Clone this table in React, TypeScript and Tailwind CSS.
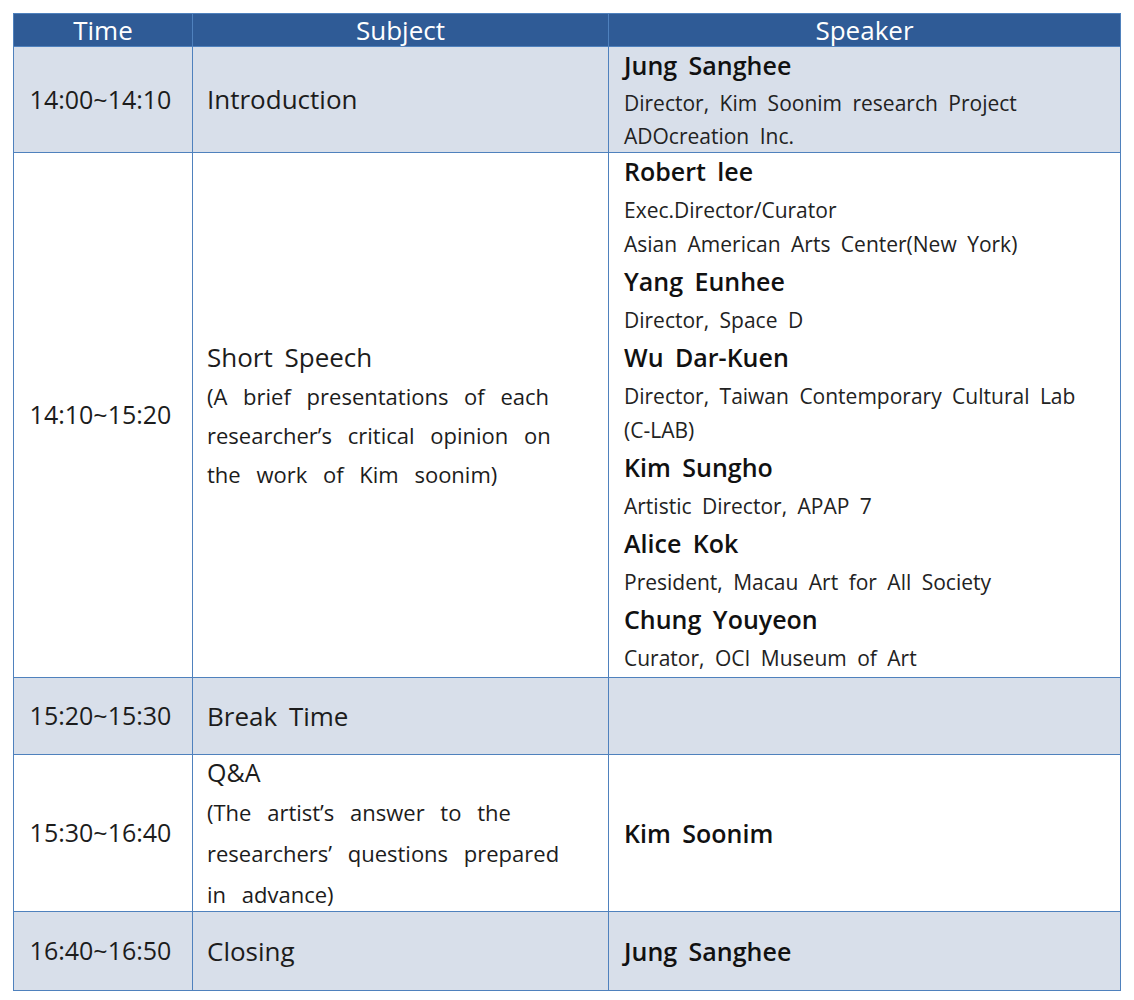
import React from "react";

type Speaker = { name: string; lines: string[] };

const shortSpeech: Speaker[] = [
  { name: "Robert lee", lines: ["Exec.Director/Curator", "Asian American Arts Center(New York)"] },
  { name: "Yang Eunhee", lines: ["Director, Space D"] },
  { name: "Wu Dar-Kuen", lines: ["Director, Taiwan Contemporary Cultural Lab", "(C-LAB)"] },
  { name: "Kim Sungho", lines: ["Artistic Director, APAP 7"] },
  { name: "Alice Kok", lines: ["President, Macau Art for All Society"] },
  { name: "Chung Youyeon", lines: ["Curator, OCI Museum of Art"] },
];

const cell = "border border-[#4f81bd] p-0";
const timeCell = `${cell} text-center text-[25px] pr-[5px]`;
const nameText = "text-[25px] leading-[36px] font-semibold text-[#111]";

function SpeakerList({ items }: { items: Speaker[] }) {
  return (
    <div className="flex flex-col pl-[15px]">
      {items.map((s) => (
        <div key={s.name} className="pb-[2px]">
          <div className={nameText}>{s.name}</div>
          <div className="pt-[4px]">
            {s.lines.map((l) => (
              <div key={l} className="text-[21px] leading-[34px] text-[#222]">
                {l}
              </div>
            ))}
          </div>
        </div>
      ))}
    </div>
  );
}

export default function App() {
  return (
    <div className="bg-white w-[1134px] h-[1000px] overflow-hidden pt-[13px] pl-[13px] [font-family:'Open_Sans','Noto_Sans',sans-serif] [word-spacing:5px]">
      <table className="border-collapse table-fixed w-[1107px]">
        <colgroup>
          <col className="w-[179px]" />
          <col className="w-[416px]" />
          <col className="w-[512px]" />
        </colgroup>
        <thead>
          <tr className="h-[32px] bg-[#2f5b96] text-white text-[26px] leading-[32px]">
            <th className={`${cell} font-normal`}>Time</th>
            <th className={`${cell} font-normal`}>Subject</th>
            <th className={`${cell} font-normal`}>Speaker</th>
          </tr>
        </thead>
        <tbody className="text-[#1c1c1c]">
          <tr className="h-[106px] bg-[#d8dfea]">
            <td className={timeCell}>14:00~14:10</td>
            <td className={`${cell} pl-[14px] text-[26px]`}>Introduction</td>
            <td className={`${cell} align-top`}>
              <div className="pl-[15px] h-[104px]">
                <div className={nameText}>Jung Sanghee</div>
                <div className="pt-[4px] text-[21px] leading-[33px] text-[#222]">
                  <div>Director, Kim Soonim research Project</div>
                  <div>ADOcreation Inc.</div>
                </div>
              </div>
            </td>
          </tr>
          <tr className="h-[525px] bg-white">
            <td className={timeCell}>14:10~15:20</td>
            <td className={`${cell} pl-[14px]`}>
              <div className="text-[26px] leading-[40px]">Short Speech</div>
              <div className="text-[22px] leading-[39px] [word-spacing:10px] pr-[20px]">
                (A brief presentations of each researcher’s critical opinion on the work of Kim soonim)
              </div>
            </td>
            <td className={`${cell} align-top`}>
              <SpeakerList items={shortSpeech} />
            </td>
          </tr>
          <tr className="h-[77px] bg-[#d8dfea]">
            <td className={timeCell}>15:20~15:30</td>
            <td className={`${cell} pl-[14px] text-[26px]`}>Break Time</td>
            <td className={cell}></td>
          </tr>
          <tr className="h-[157px] bg-white">
            <td className={timeCell}>15:30~16:40</td>
            <td className={`${cell} pl-[14px] pr-[20px]`}>
              <div className="h-[155px] flex flex-col justify-center">
                <div className="text-[25px] leading-[40px] shrink-0">Q&amp;A</div>
                <div className="text-[22px] leading-[41px] [word-spacing:10px] shrink-0">
                  (The artist’s answer to the researchers’ questions prepared in advance)
                </div>
              </div>
            </td>
            <td className={`${cell} pl-[15px] ${nameText}`}>Kim Soonim</td>
          </tr>
          <tr className="h-[79px] bg-[#d8dfea]">
            <td className={timeCell}>16:40~16:50</td>
            <td className={`${cell} pl-[14px] text-[26px]`}>Closing</td>
            <td className={`${cell} pl-[15px] ${nameText}`}>Jung Sanghee</td>
          </tr>
        </tbody>
      </table>
    </div>
  );
}
